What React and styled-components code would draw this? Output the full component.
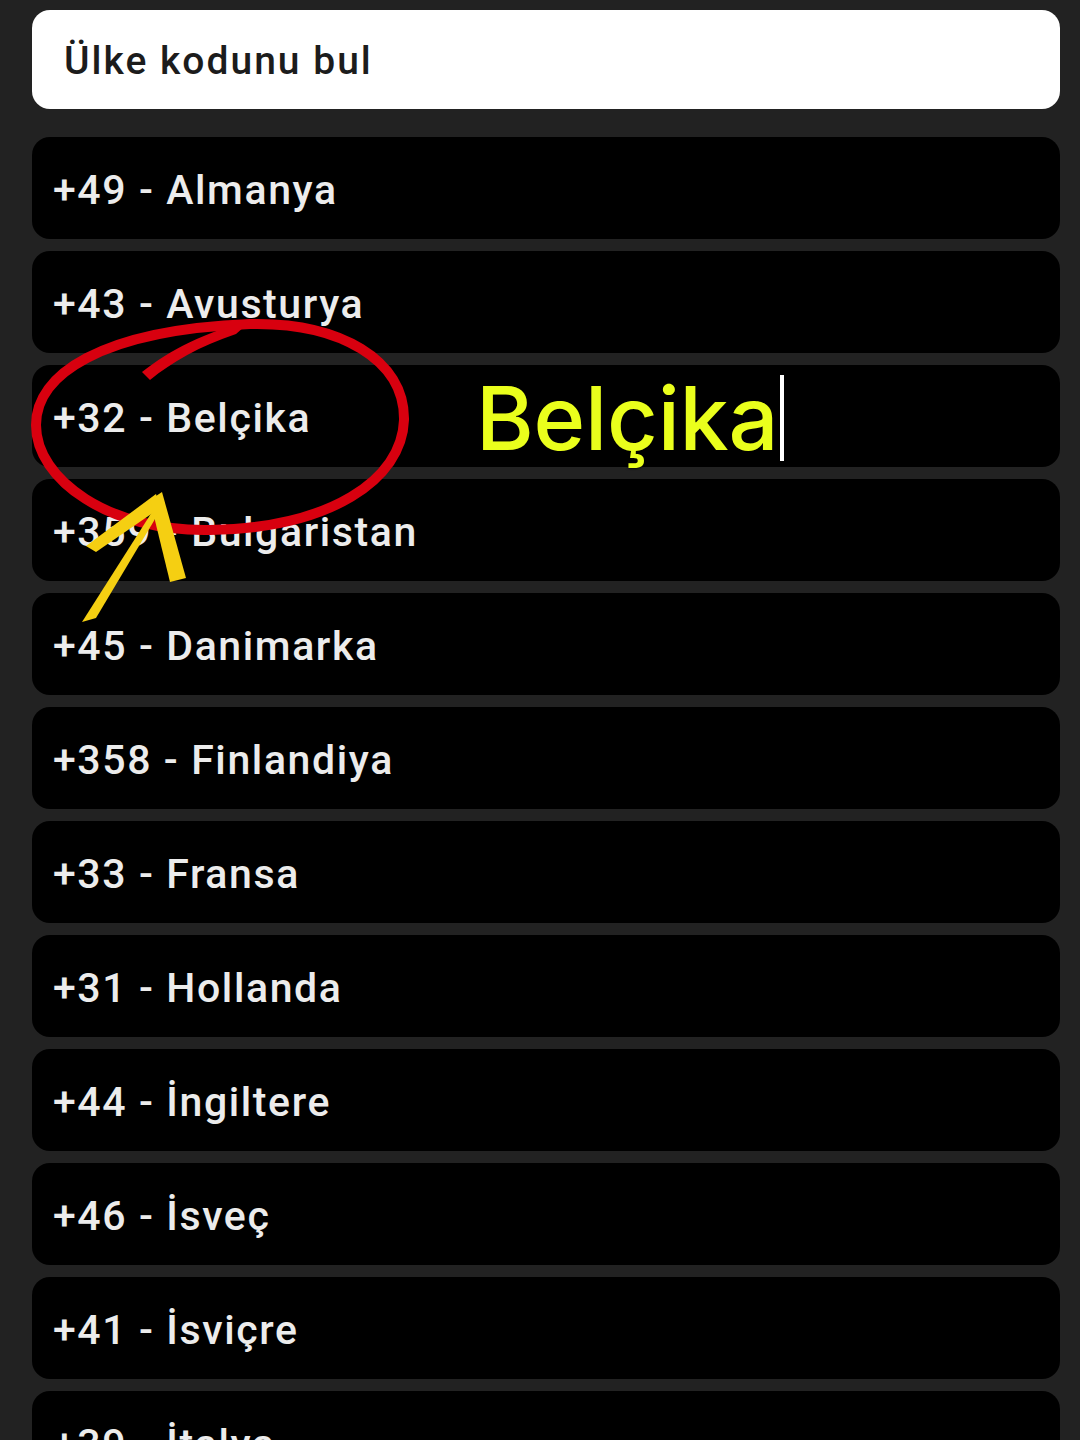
import React from "react";
import styled, { createGlobalStyle } from "styled-components";

const Global = createGlobalStyle`
  html, body { margin: 0; padding: 0; background: #222222; }
  body { font-family: Roboto, "Noto Sans", sans-serif; overflow: hidden; }
`;

const Page = styled.div`
  position: relative;
  width: 1080px;
  height: 1440px;
  overflow: hidden;
  background: #222222;
  box-sizing: border-box;
  padding: 10px 20px 0 32px;
`;

const Search = styled.div`
  height: 99px;
  background: #ffffff;
  border-radius: 18px;
  display: flex;
  align-items: center;
  padding-left: 32px;
  padding-top: 3px;
  box-sizing: border-box;
  font-family: Roboto, sans-serif;
  font-weight: 500;
  font-size: 39px;
  letter-spacing: 2px;
  color: #1c1c1c;
  margin-bottom: 28px;
`;

const List = styled.div`
  display: flex;
  flex-direction: column;
  gap: 12px;
`;

const Row = styled.div`
  height: 102px;
  flex: none;
  background: #000000;
  border-radius: 18px;
  display: flex;
  align-items: center;
  padding-left: 21px;
  padding-top: 4px;
  box-sizing: border-box;
  font-family: Roboto, sans-serif;
  font-weight: 500;
  font-size: 41px;
  letter-spacing: 1.6px;
  color: #ececec;
`;

const Overlay = styled.svg`
  position: absolute;
  left: 0;
  top: 0;
  pointer-events: none;
`;

const Caption = styled.div`
  position: absolute;
  left: 476px;
  top: 368px;
  display: flex;
  align-items: center;
  font-family: Inter, "Open Sans", sans-serif;
  font-weight: 500;
  font-size: 88px;
  line-height: 100px;
  color: #eaff1c;
  text-shadow: 0 0 2px #000, 0 0 3px #000;
  letter-spacing: -0.2px;
`;

const Cursor = styled.span`
  display: inline-block;
  width: 4px;
  height: 86px;
  background: #ffffff;
  margin-left: 2px;
`;

const countries = [
  "+49 - Almanya",
  "+43 - Avusturya",
  "+32 - Belçika",
  "+359 - Bulgaristan",
  "+45 - Danimarka",
  "+358 - Finlandiya",
  "+33 - Fransa",
  "+31 - Hollanda",
  "+44 - İngiltere",
  "+46 - İsveç",
  "+41 - İsviçre",
  "+39 - İtalya",
];

export default function App() {
  return (
    <>
      <Global />
      <Page>
        <Search>Ülke kodunu bul</Search>
        <List>
          {countries.map((c) => (
            <Row key={c}>{c}</Row>
          ))}
        </List>
        <Overlay width="1080" height="1440" viewBox="0 0 1080 1440">
          <path
            d="M250 324 C 340 322, 405 360, 404 420 C 402 480, 330 528, 210 530 C 110 532, 36 480, 36 425 C 36 375, 100 330, 250 324"
            fill="none"
            stroke="#d8000f"
            strokeWidth="10"
            strokeLinecap="round"
          />
          <path
            d="M142 372 C 170 350, 205 332, 252 320 L 236 334 C 200 346, 172 362, 150 380 Z"
            fill="#d8000f"
          />
          <path d="M82 622 L 152 512 L 164 504 L 96 618 Z" fill="#f5cf12" />
          <path d="M86 546 L 156 494 L 160 508 L 96 552 Z" fill="#f5cf12" />
          <path d="M150 500 L 162 492 L 186 578 L 170 582 Z" fill="#f5cf12" />
        </Overlay>
        <Caption>
          Belçika
          <Cursor />
        </Caption>
      </Page>
    </>
  );
}
